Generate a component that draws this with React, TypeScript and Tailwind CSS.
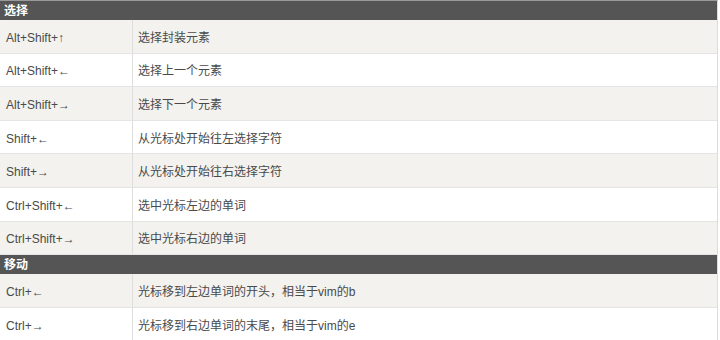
const sections: { title: string; rows: [string, string][] }[] = [
  {
    title: '选择',
    rows: [
      ['Alt+Shift+↑', '选择封装元素'],
      ['Alt+Shift+←', '选择上一个元素'],
      ['Alt+Shift+→', '选择下一个元素'],
      ['Shift+←', '从光标处开始往左选择字符'],
      ['Shift+→', '从光标处开始往右选择字符'],
      ['Ctrl+Shift+←', '选中光标左边的单词'],
      ['Ctrl+Shift+→', '选中光标右边的单词'],
    ],
  },
  {
    title: '移动',
    rows: [
      ['Ctrl+←', '光标移到左边单词的开头，相当于vim的b'],
      ['Ctrl+→', '光标移到右边单词的末尾，相当于vim的e'],
    ],
  },
];

export default function App() {
  return (
    <div
      className="w-[720px] h-[340px] overflow-hidden bg-white text-[12px] text-[#4a4a4a]"
      style={{ fontFamily: '"Liberation Sans", Arial, "Noto Sans CJK SC", sans-serif' }}
    >
      <div className="w-[718px] border-r border-[#dcdcdc] border-t border-t-[#9a9a9a]">
        {sections.map((s) => (
          <div key={s.title}>
            {/* section header */}
            <div className="h-[19px] bg-[#555555] flex items-center pl-[4px] text-white font-bold text-[12px]">
              {s.title}
            </div>
            {s.rows.map(([key, desc], i) => (
              <div
                key={key}
                className={`flex h-[33.6px] border-b border-[#e4e4e4] ${i % 2 === 0 ? 'bg-[#f3f2ee]' : 'bg-white'}`}
              >
                <div className="w-[133px] shrink-0 border-r border-[#dddddd] flex items-center pl-[6px] pt-[3px]">
                  {key}
                </div>
                <div className="flex-1 flex items-center pl-[5px] pt-[3px]">{desc}</div>
              </div>
            ))}
          </div>
        ))}
      </div>
    </div>
  );
}
